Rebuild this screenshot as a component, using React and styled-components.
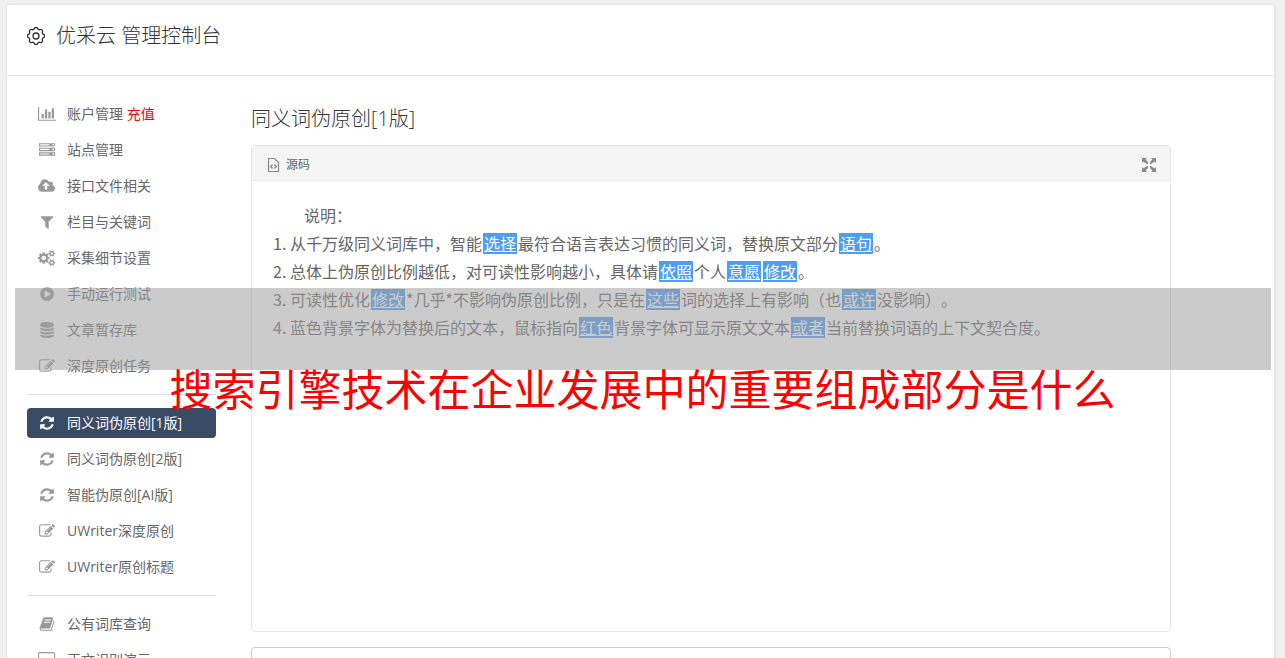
import styled, { createGlobalStyle } from "styled-components";

const GlobalStyle = createGlobalStyle`
  * {
    box-sizing: border-box;
  }

  html {
    overflow: hidden;
  }

  body {
    margin: 0;
    background: #f0f0f0;
    color: #666;
    font-family: "Open Sans", "Noto Sans CJK SC", sans-serif;
    font-size: 14px;
    font-weight: 400;
    text-spacing-trim: space-all;
  }
`;

const Page = styled.div`
  position: relative;
  height: 100vh;
  padding: 4px 9px 0 6px;
  overflow: hidden;
`;

const Panel = styled.div`
  min-height: 100%;
  background: #fff;
  border: 1px solid #e5e5e5;
  border-right-width: 2px;
  border-radius: 4px;
`;

const Header = styled.header`
  display: flex;
  align-items: center;
  gap: 10px;
  height: 71px;
  padding: 0 19px 8px;
  border-bottom: 1px solid #e5e5e5;
`;

const Title = styled.h1`
  margin: 0;
  color: #333;
  font-size: 20px;
  font-weight: 300;
  line-height: 28px;
`;

const Body = styled.div`
  display: flex;
  gap: 35px;
  padding: 20px;
`;

const Sidebar = styled.nav`
  flex: 0 0 189px;
`;

const MenuList = styled.ul`
  margin: 0;
  padding: 0;
  list-style: none;

  & + & {
    margin-top: 13px;
    padding-top: 10px;
    border-top: 1px solid #ddd;
  }
`;

const MenuLink = styled.a`
  display: flex;
  align-items: center;
  height: 30px;
  margin: 3px 0 6px;
  padding: 0 10px;
  gap: 10px;
  border-radius: 4px;
  background: ${(props) => (props.$active ? "#3a4b66" : "transparent")};
  color: ${(props) => (props.$active ? "#fff" : "#666")};
  line-height: 20px;
  text-decoration: none;
  white-space: nowrap;

  svg {
    color: ${(props) => (props.$active ? "#fff" : "#999")};
  }
`;

const IconBox = styled.span`
  display: flex;
  justify-content: center;
  width: 20px;
`;

const Recharge = styled.span`
  color: #f00;
`;

const Content = styled.main`
  flex: 0 1 920px;
  min-width: 0;
`;

const Heading = styled.h2`
  margin: 9px 0 12px;
  color: #333;
  font-size: 20px;
  font-weight: 300;
  line-height: 28px;
`;

const Editor = styled.section`
  border: 1px solid #e5e5e5;
  border-radius: 4px;
`;

const Toolbar = styled.div`
  display: flex;
  align-items: center;
  justify-content: space-between;
  height: 35px;
  padding: 3px 14px 0;
  background: #f5f5f5;
  border-bottom: 1px solid #e5e5e5;
`;

const ToolButton = styled.button`
  display: flex;
  align-items: center;
  gap: 6px;
  padding: 0;
  border: 0;
  background: none;
  color: #666;
  font: inherit;
  font-size: 12px;
  line-height: 16px;

  svg {
    color: #888;
  }
`;

const Article = styled.div`
  min-height: 450px;
  padding: 20px;
  font-family: "Noto Sans CJK SC", sans-serif;
  font-size: 16px;
  line-height: 28px;
`;

const Intro = styled.p`
  margin: 0;
  text-indent: 2em;
`;

const Steps = styled.ol`
  margin: 0;
  padding-left: 18px;
`;

const Mark = styled.span`
  margin: 0 1px;
  padding: 0 1px;
  background: linear-gradient(#4b9df5, #4b9df5) center / 100% 21px no-repeat;
  color: #fff;
  text-decoration: underline;
`;

const Result = styled.textarea`
  display: block;
  width: 100%;
  height: 200px;
  margin-top: 15px;
  border: 1px solid #ccc;
  border-radius: 4px;
  resize: none;
`;

const Band = styled.div`
  position: absolute;
  top: 288px;
  right: 14px;
  left: 15px;
  height: 82px;
  background: rgba(160, 160, 160, 0.55);
`;

const Caption = styled.div`
  position: absolute;
  top: 360px;
  right: 0;
  left: 0;
  color: #f00;
  font-size: 43px;
  line-height: 60px;
  text-align: center;
  white-space: nowrap;
`;

const icons = {
  chart: {
    width: 2048,
    d: "M640 896v512h-256v-512h256zm384-512v1024h-256v-1024h256zm1024 1152v128h-2048v-1536h128v1408h1920zm-640-896v768h-256v-768h256zm384-384v1152h-256v-1152h256z",
  },
  server: {
    width: 1792,
    d: "M128 1408h1024v-128h-1024v128zm0-512h1024v-128h-1024v128zm1568 448q0-40-28-68t-68-28-68 28-28 68 28 68 68 28 68-28 28-68zm-1568-960h1024v-128h-1024v128zm1568 448q0-40-28-68t-68-28-68 28-28 68 28 68 68 28 68-28 28-68zm0-512q0-40-28-68t-68-28-68 28-28 68 28 68 68 28 68-28 28-68zm96 832v384h-1792v-384h1792zm0-512v384h-1792v-384h1792zm0-512v384h-1792v-384h1792z",
  },
  upload: {
    width: 1920,
    d: "M1280 864q0-14-9-23l-352-352q-9-9-23-9t-23 9l-351 351q-10 12-10 24 0 14 9 23t23 9h224v352q0 13 9.5 22.5t22.5 9.5h192q13 0 22.5-9.5t9.5-22.5v-352h224q13 0 22.5-9.5t9.5-22.5zm640 288q0 159-112.5 271.5t-271.5 112.5h-1088q-185 0-316.5-131.5t-131.5-316.5q0-130 70-240t188-165q-2-30-2-43 0-212 150-362t362-150q156 0 285.5 87t188.5 231q71-62 166-62 106 0 181 75t75 181q0 76-41 138 130 31 213.5 135.5t83.5 238.5z",
  },
  filter: {
    width: 1792,
    d: "M1595 295q17 41-14 70l-493 493v742q0 42-39 59-13 5-25 5-27 0-45-19l-256-256q-19-19-19-45v-486l-493-493q-31-29-14-70 17-39 59-39h1280q42 0 59 39z",
  },
  cogs: {
    width: 1920,
    d: "M896 896q0-106-75-181t-181-75-181 75-75 181 75 181 181 75 181-75 75-181zm768 512q0-52-38-90t-90-38-90 38-38 90q0 53 37.5 90.5t90.5 37.5 90.5-37.5 37.5-90.5zm0-1024q0-52-38-90t-90-38-90 38-38 90q0 53 37.5 90.5t90.5 37.5 90.5-37.5 37.5-90.5zm-384 421v185q0 10-7 19.5t-16 10.5l-155 24q-11 35-32 76 34 48 90 115 7 11 7 20 0 12-7 19-23 30-82.5 89.5t-78.5 59.5q-11 0-21-7l-115-90q-37 19-77 31-11 108-23 155-7 24-30 24h-186q-11 0-20-7.5t-10-17.5l-23-153q-34-10-75-31l-118 89q-7 7-20 7-11 0-21-8-144-133-144-160 0-9 7-19 10-14 41-53t47-61q-23-44-35-82l-152-24q-10-1-17-9.5t-7-19.5v-185q0-10 7-19.5t16-10.5l155-24q11-35 32-76-34-48-90-115-7-11-7-20 0-12 7-20 22-30 82-89t79-59q11 0 21 7l115 90q34-18 77-32 11-108 23-154 7-24 30-24h186q11 0 20 7.5t10 17.5l23 153q34 10 75 31l118-89q8-7 20-7 11 0 21 8 144 133 144 160 0 8-7 19-12 16-42 54t-45 60q23 48 34 82l152 23q10 2 17 10.5t7 19.5zm640 533v140q0 16-149 31-12 27-30 52 51 113 51 138 0 4-4 7-122 71-124 71-8 0-46-47t-52-68q-20 2-30 2t-30-2q-14 21-52 68t-46 47q-2 0-124-71-4-3-4-7 0-25 51-138-18-25-30-52-149-15-149-31v-140q0-16 149-31 13-29 30-52-51-113-51-138 0-4 4-7 4-2 35-20t59-34 30-16q8 0 46 46.5t52 67.5q20-2 30-2t30 2q51-71 92-112l6-2q4 0 124 70 4 3 4 7 0 25-51 138 17 23 30 52 149 15 149 31zm0-1024v140q0 16-149 31-12 27-30 52 51 113 51 138 0 4-4 7-122 71-124 71-8 0-46-47t-52-68q-20 2-30 2t-30-2q-14 21-52 68t-46 47q-2 0-124-71-4-3-4-7 0-25 51-138-18-25-30-52-149-15-149-31v-140q0-16 149-31 13-29 30-52-51-113-51-138 0-4 4-7 4-2 35-20t59-34 30-16q8 0 46 46.5t52 67.5q20-2 30-2t30 2q51-71 92-112l6-2q4 0 124 70 4 3 4 7 0 25-51 138 17 23 30 52 149 15 149 31z",
  },
  play: {
    width: 1792,
    d: "M896 128q209 0 385.5 103t279.5 279.5 103 385.5-103 385.5-279.5 279.5-385.5 103-385.5-103-279.5-279.5-103-385.5 103-385.5 279.5-279.5 385.5-103zm384 823q32-18 32-55t-32-55l-544-320q-31-19-64-1-32 19-32 56v640q0 37 32 56 16 8 32 8 17 0 32-9z",
  },
  database: {
    width: 1792,
    d: "M896 768q237 0 443-43t325-127v170q0 69-103 128t-280 93.5-385 34.5-385-34.5-280-93.5-103-128v-170q119 84 325 127t443 43zm0 768q237 0 443-43t325-127v170q0 69-103 128t-280 93.5-385 34.5-385-34.5-280-93.5-103-128v-170q119 84 325 127t443 43zm0-384q237 0 443-43t325-127v170q0 69-103 128t-280 93.5-385 34.5-385-34.5-280-93.5-103-128v-170q119 84 325 127t443 43zm0-1152q208 0 385 34.5t280 93.5 103 128v128q0 69-103 128t-280 93.5-385 34.5-385-34.5-280-93.5-103-128v-128q0-69 103-128t280-93.5 385-34.5z",
  },
  edit: {
    width: 1792,
    d: "M888 1184l116-116-152-152-116 116v56h96v96h56zm440-720q-16-16-33 1l-350 350q-17 17-1 33t33-1l350-350q17-17 1-33zm80 594v190q0 119-84.5 203.5t-203.5 84.5h-832q-119 0-203.5-84.5t-84.5-203.5v-832q0-119 84.5-203.5t203.5-84.5h832q63 0 117 25 15 7 18 23 3 17-9 29l-49 49q-14 14-32 8-23-6-45-6h-832q-66 0-113 47t-47 113v832q0 66 47 113t113 47h832q66 0 113-47t47-113v-126q0-13 9-22l64-64q15-15 35-7t20 29zm-96-738l288 288-672 672h-288v-288zm444 132l-92 92-288-288 92-92q28-28 68-28t68 28l152 152q28 28 28 68t-28 68z",
  },
  refresh: {
    width: 1792,
    d: "M1639 1056q0 5-1 7-64 268-268 434.5t-478 166.5q-146 0-282.5-55t-243.5-157l-129 129q-19 19-45 19t-45-19-19-45v-448q0-26 19-45t45-19h448q26 0 45 19t19 45-19 45l-137 137q71 66 161 102t187 36q134 0 250-65t186-179q11-17 53-117 8-23 30-23h192q13 0 22.5 9.5t9.5 22.5zm25-800v448q0 26-19 45t-45 19h-448q-26 0-45-19t-19-45 19-45l138-138q-148-137-349-137-134 0-250 65t-186 179q-11 17-53 117-8 23-30 23h-199q-13 0-22.5-9.5t-9.5-22.5v-7q65-268 270-434.5t480-166.5q146 0 284 55.5t245 156.5l130-129q19-19 45-19t45 19 19 45z",
  },
  book: {
    width: 1792,
    d: "M1703 478q40 57 18 129l-275 906q-19 64-76.5 107.5t-122.5 43.5h-923q-77 0-148.5-53.5t-99.5-131.5q-24-67-2-127 0-4 3-27t4-37q1-8-3-21.5t-3-19.5q2-11 8-21t16.5-23.5 16.5-23.5q23-38 45-91.5t30-91.5q3-10 .5-30t-.5-28q3-11 17-28t17-23q21-36 42-92t25-90q1-9-2.5-32t.5-28q4-13 22-30.5t22-22.5q19-26 42.5-84.5t27.5-96.5q1-8-3-25.5t-2-26.5q2-8 9-18t18-23 17-21q8-12 16.5-30.5t15-35 16-36 19.5-32 26.5-23.5 36-11.5 47.5 5.5l-1 3q38-9 51-9h761q74 0 114 56t18 130l-274 906q-36 119-71.5 153.5t-128.5 34.5h-869q-27 0-38 15-11 16-1 43 24 70 144 70h923q29 0 56-15.5t35-41.5l300-987q7-22 5-57 38 15 59 43zm-1064 2q-4 13 2 22.5t20 9.5h608q13 0 25.5-9.5t16.5-22.5l21-64q4-13-2-22.5t-20-9.5h-608q-13 0-25.5 9.5t-16.5 22.5zm-83 256q-4 13 2 22.5t20 9.5h608q13 0 25.5-9.5t16.5-22.5l21-64q4-13-2-22.5t-20-9.5h-608q-13 0-25.5 9.5t-16.5 22.5z",
  },
  desktop: {
    width: 1920,
    d: "M1792 992v-832q0-13-9.500-22.500t-22.500-9.500h-1600q-13 0-22.500 9.500t-9.500 22.500v832q0 13 9.500 22.500t22.500 9.500h1600q13 0 22.500-9.500t9.500-22.500zm128-832v1088q0 66-47 113t-113 47h-544q0 37 16 77.500t32 71 16 43.500q0 26-19 45t-45 19h-512q-26 0-45-19t-19-45q0-14 16-44t32-70 16-78h-544q-66 0-113-47t-47-113v-1088q0-66 47-113t113-47h1600q66 0 113 47t47 113z",
  },
};

const Icon = ({ name }) => (
  <svg
    width={icons[name].width / 112}
    height="16"
    viewBox={`0 0 ${icons[name].width} 1792`}
    fill="currentColor"
    aria-hidden="true"
  >
    <path d={icons[name].d} />
  </svg>
);

const GearIcon = () => (
  <svg width="20" height="20" viewBox="0 0 20 20" fill="none" stroke="#333" strokeWidth="1.3" aria-hidden="true">
    <path
      d="M8 3.200Q8.300 1.500 10 1.500T12 3.200L13.400 3.800Q14.800 2.800 16 4T16.200 6.600L16.800 8Q18.500 8.300 18.500 10T16.800 12L16.200 13.400Q17.200 14.800 16 16T13.400 16.200L12 16.800Q11.700 18.500 10 18.500T8 16.800L6.600 16.200Q5.200 17.200 4 16T3.800 13.400L3.200 12Q1.500 11.700 1.500 10T3.200 8L3.800 6.600Q2.800 5.200 4 4T6.600 3.800Z"
      strokeLinejoin="round"
    />
    <circle cx="10" cy="10" r="3" />
  </svg>
);

const SourceIcon = () => (
  <svg width="14" height="16" viewBox="0 0 14 16" fill="none" stroke="currentColor" aria-hidden="true">
    <path d="M2.500 1.500h6l4 4v9h-10z" strokeWidth="1.200" />
    <path d="M6.500 7.500 4.700 9.500l1.800 2M8.500 7.500l1.800 2-1.800 2" strokeWidth="1.300" />
  </svg>
);

const ExpandIcon = () => (
  <svg width="14" height="14" viewBox="0 0 14 14" fill="currentColor" aria-hidden="true">
    <path d="M0 0h5L3.500 1.500 6 4v2H5L1.500 3.500 0 5zM14 0v5l-1.500-1.500L9 6H8V4l2.500-2.500L9 0zM0 14V9l1.500 1.500L5 8h1v2l-2.500 2.500L5 14zM14 14H9l1.500-1.500L8 10V8h1l3.500 2.500L14 9z" />
  </svg>
);

const menus = [
  [
    { icon: "chart", label: "账户管理", extra: "充值" },
    { icon: "server", label: "站点管理" },
    { icon: "upload", label: "接口文件相关" },
    { icon: "filter", label: "栏目与关键词" },
    { icon: "cogs", label: "采集细节设置" },
    { icon: "play", label: "手动运行测试" },
    { icon: "database", label: "文章暂存库" },
    { icon: "edit", label: "深度原创任务" },
  ],
  [
    { icon: "refresh", label: "同义词伪原创[1版]", active: true },
    { icon: "refresh", label: "同义词伪原创[2版]" },
    { icon: "refresh", label: "智能伪原创[AI版]" },
    { icon: "edit", label: "UWriter深度原创" },
    { icon: "edit", label: "UWriter原创标题" },
  ],
  [
    { icon: "book", label: "公有词库查询" },
    { icon: "desktop", label: "正文识别演示" },
  ],
];

const App = () => {
  return (
    <>
      <GlobalStyle />
      <Page>
        <Panel>
          <Header>
            <GearIcon />
            <Title>优采云 管理控制台</Title>
          </Header>
          <Body>
            <Sidebar>
              {menus.map((items, i) => (
                <MenuList key={i}>
                  {items.map((item) => (
                    <li key={item.label}>
                      <MenuLink href="#" $active={item.active}>
                        <IconBox>
                          <Icon name={item.icon} />
                        </IconBox>
                        <span>
                          {item.label}
                          {item.extra && <Recharge> {item.extra}</Recharge>}
                        </span>
                      </MenuLink>
                    </li>
                  ))}
                </MenuList>
              ))}
            </Sidebar>
            <Content>
              <Heading>同义词伪原创[1版]</Heading>
              <Editor>
                <Toolbar>
                  <ToolButton type="button">
                    <SourceIcon />
                    源码
                  </ToolButton>
                  <ToolButton type="button" aria-label="全屏">
                    <ExpandIcon />
                  </ToolButton>
                </Toolbar>
                <Article>
                  <Intro>说明：</Intro>
                  <Steps>
                    <li>
                      从千万级同义词库中，智能<Mark>选择</Mark>最符合语言表达习惯的同义词，替换原文部分<Mark>语句</Mark>。
                    </li>
                    <li>
                      总体上伪原创比例越低，对可读性影响越小，具体请<Mark>依照</Mark>个人<Mark>意愿</Mark><Mark>修改</Mark>。
                    </li>
                    <li>
                      可读性优化<Mark>修改</Mark>*几乎*不影响伪原创比例，只是在<Mark>这些</Mark>词的选择上有影响（也<Mark>或许</Mark>没影响）。
                    </li>
                    <li>
                      蓝色背景字体为替换后的文本，鼠标指向<Mark>红色</Mark>背景字体可显示原文文本<Mark>或者</Mark>当前替换词语的上下文契合度。
                    </li>
                  </Steps>
                </Article>
              </Editor>
              <Result aria-label="原创结果" />
            </Content>
          </Body>
        </Panel>
        <Band />
        <Caption>搜索引擎技术在企业发展中的重要组成部分是什么</Caption>
      </Page>
    </>
  );
};

export default App;
